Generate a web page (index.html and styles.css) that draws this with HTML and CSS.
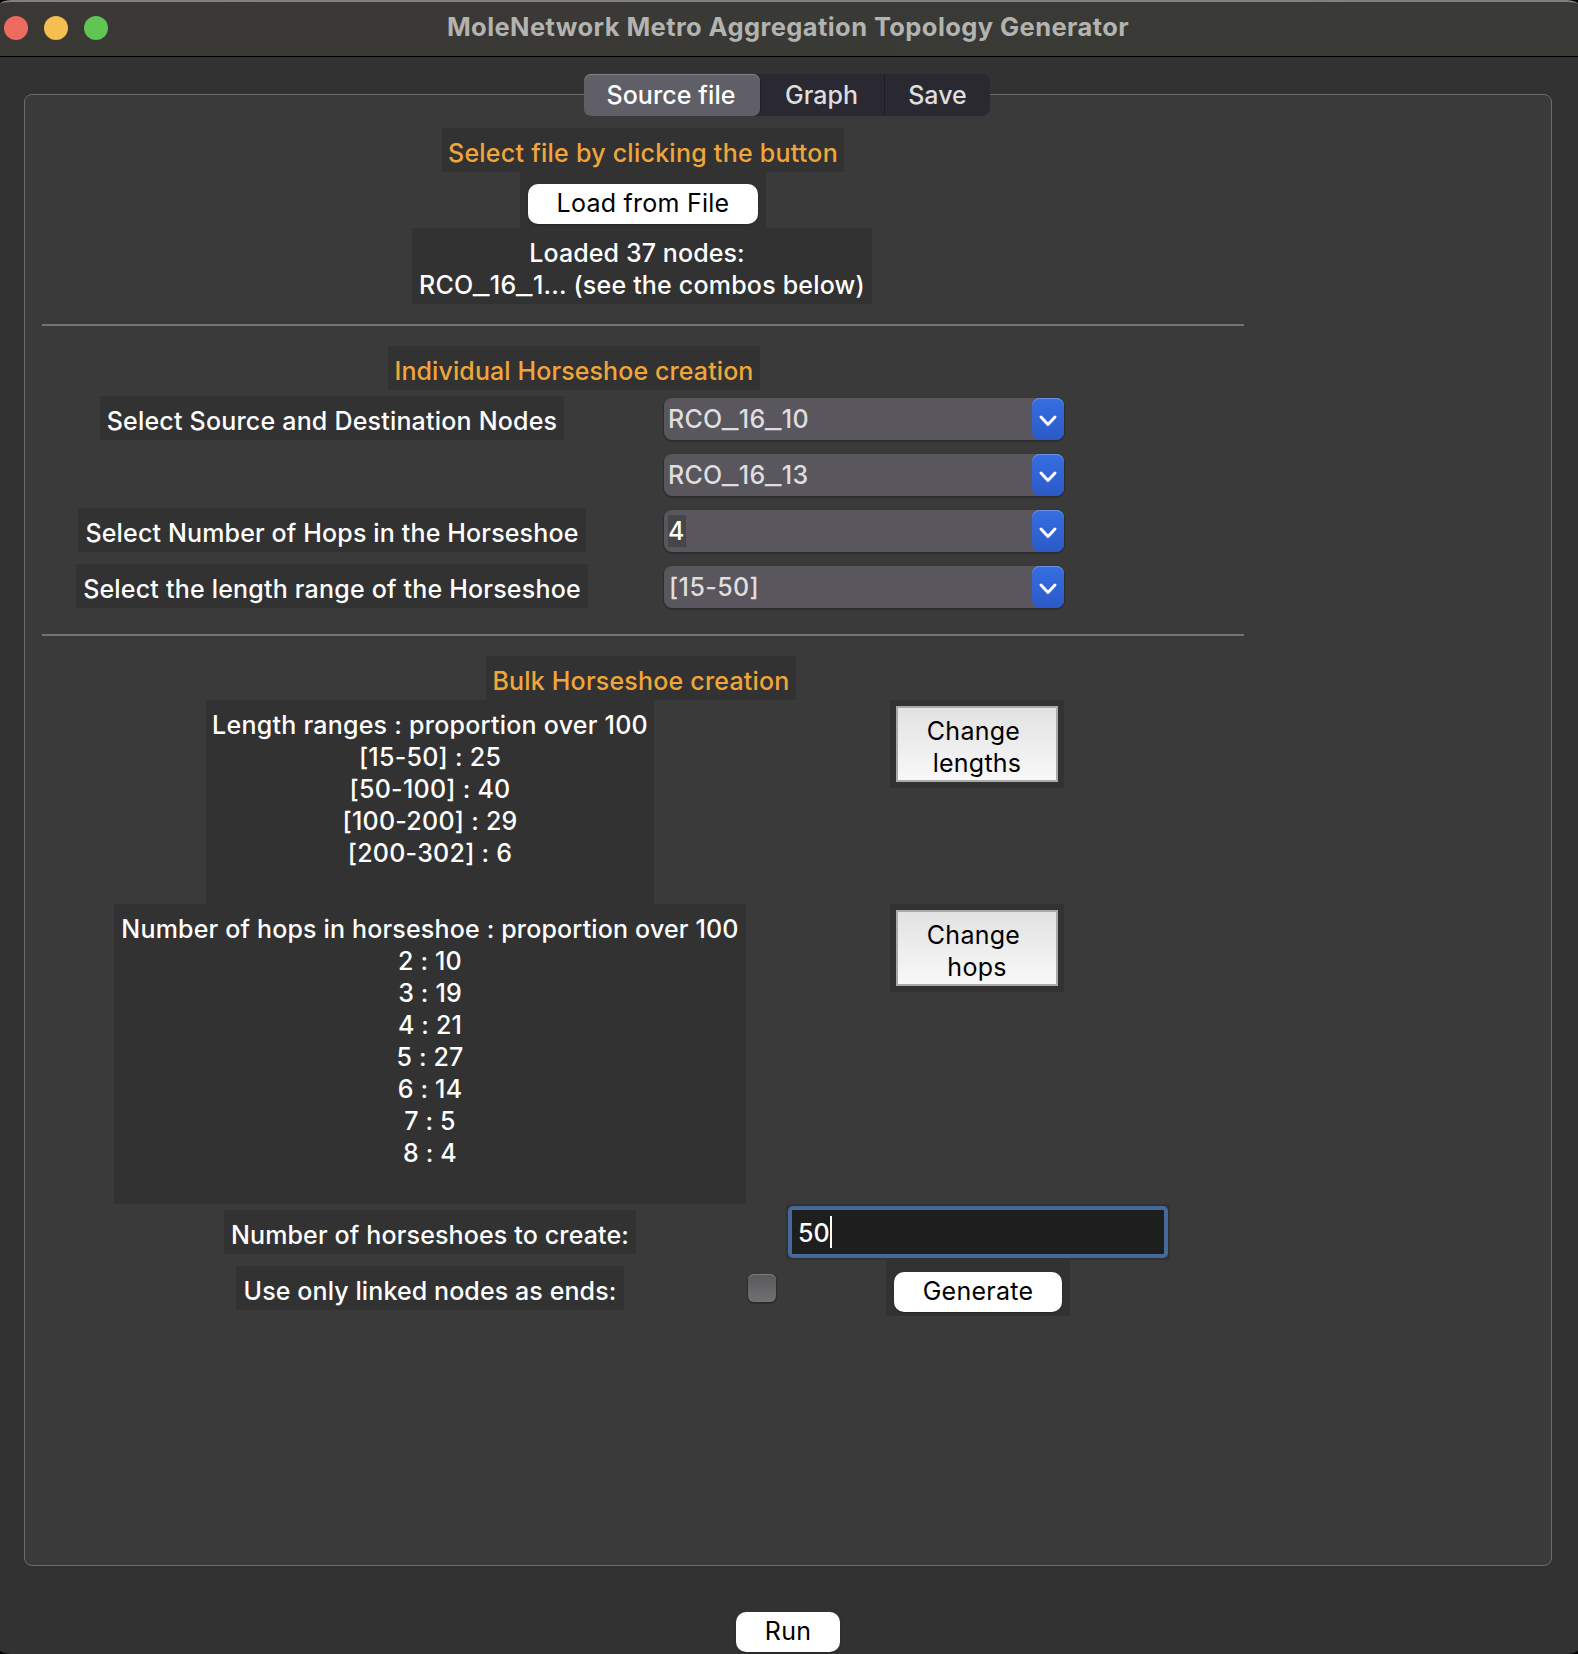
FILE: index.html
```html
<!DOCTYPE html>
<html lang="en">
<head>
<meta charset="utf-8">
<title>MoleNetwork Metro Aggregation Topology Generator</title>
<link rel="stylesheet" href="styles.css">
</head>
<body>
<div class="window">
  <header class="titlebar">
    <div class="lights">
      <span class="light light-close"></span>
      <span class="light light-min"></span>
      <span class="light light-zoom"></span>
    </div>
    <h1 class="title">MoleNetwork Metro Aggregation Topology Generator</h1>
  </header>

  <main class="content">
    <nav class="tabs">
      <div class="tab tab-source tab-active">Source file</div>
      <div class="tab tab-graph">Graph</div>
      <div class="tab tab-save">Save</div>
    </nav>

    <div class="panel">
      <section class="load">
        <div class="label heading w-select-file">Select file by clicking the button</div>
        <div class="frame frame-load"><button class="push push-load">Load from File</button></div>
        <div class="label w-loaded">
          <div class="loaded-count">Loaded 37 nodes:</div>
          <div>RCO<span class="us">_</span>16<span class="us">_</span>1... (see the combos below)</div>
        </div>
      </section>

      <hr class="rule">

      <section class="individual">
        <div class="label heading span-all w-individual">Individual Horseshoe creation</div>
        <div class="label w-nodes">Select Source and Destination Nodes</div>
        <div class="combo"><span class="combo-text">RCO<span class="us">_</span>16<span class="us">_</span>10</span><span class="combo-arrow"><svg width="20" height="14" viewBox="0 0 20 14"><path d="M3 3l7 7.5L17 3"/></svg></span></div>
        <div></div>
        <div class="combo"><span class="combo-text">RCO<span class="us">_</span>16<span class="us">_</span>13</span><span class="combo-arrow"><svg width="20" height="14" viewBox="0 0 20 14"><path d="M3 3l7 7.5L17 3"/></svg></span></div>
        <div class="label w-hops">Select Number of Hops in the Horseshoe</div>
        <div class="combo"><span class="combo-text combo-selected">4</span><span class="combo-arrow"><svg width="20" height="14" viewBox="0 0 20 14"><path d="M3 3l7 7.5L17 3"/></svg></span></div>
        <div class="label w-range">Select the length range of the Horseshoe</div>
        <div class="combo"><span class="combo-text combo-range">[15-50]</span><span class="combo-arrow"><svg width="20" height="14" viewBox="0 0 20 14"><path d="M3 3l7 7.5L17 3"/></svg></span></div>
      </section>

      <hr class="rule">

      <section class="bulk">
        <div class="label heading span-all w-bulk">Bulk Horseshoe creation</div>

        <div class="label multiline w-lengths">Length ranges : proportion over 100
[15-50] : 25
[50-100] : 40
[100-200] : 29
[200-302] : 6
</div>
        <div class="frame frame-change"><button class="bevel"><span class="bevel-first">Change</span><span>lengths</span></button></div>

        <div class="label multiline w-proportion">Number of hops in horseshoe : proportion over 100
2 : 10
3 : 19
4 : 21
5 : 27
6 : 14
7 : 5
8 : 4
</div>
        <div class="frame frame-change"><button class="bevel"><span class="bevel-first">Change</span><span>hops</span></button></div>

        <div class="label w-count">Number of horseshoes to create:</div>
        <div class="frame frame-entry"><div class="entry"><span class="entry-text">50</span><span class="caret"></span></div></div>

        <div class="label w-linked">Use only linked nodes as ends:</div>
        <div class="checkbox"></div>
        <div class="frame frame-generate"><button class="push push-generate">Generate</button></div>
      </section>
    </div>

    <button class="push push-run">Run</button>
  </main>
</div>
</body>
</html>
```
FILE: styles.css
```css
* {
  box-sizing: border-box;
}

body {
  margin: 0;
  background: #000;
  font: 450 25px/32px Inter, "Liberation Sans", sans-serif;
  letter-spacing: 0.2px;
  color: #fff;
  white-space: nowrap;
}

.window {
  display: flex;
  flex-direction: column;
  height: 1654px;
  background: #323232;
  border-radius: 12px / 4px;
  overflow: hidden;
}

/* Title bar */
.titlebar {
  display: grid;
  grid-template-columns: 446px 1fr 448px;
  align-items: center;
  height: 57px;
  padding-bottom: 2px;
  background: linear-gradient(90deg, #393835, #3a3a36);
  border-top: 2px solid #80807e;
  border-bottom: 1px solid #000;
  border-radius: 12px 12px 0 0 / 4px 4px 0 0;
}

.lights {
  display: flex;
  gap: 16px;
  padding-left: 4px;
}

.light {
  width: 24px;
  height: 24px;
  border-radius: 50%;
}

.light-close { background: #ed6a5e; }
.light-min { background: #f5bf4f; }
.light-zoom { background: #61c554; }

.title {
  margin: 0;
  padding-bottom: 3px;
  font-size: 25.5px;
  font-weight: 700;
  line-height: 32px;
  letter-spacing: 0.41px;
  text-align: center;
  color: #b3b3b0;
}

/* Tabs */
.content {
  flex: 1;
  display: flex;
  flex-direction: column;
  align-items: center;
  padding: 17px 26px 0 24px;
}

.tabs {
  display: flex;
  position: relative;
  z-index: 1;
  height: 42px;
  margin-right: 2px;
  border-radius: 8px;
  background: #2a2830;
  color: #dededf;
  letter-spacing: 0;
}

.tab {
  display: flex;
  align-items: center;
  justify-content: center;
}

.tab-source { width: 176px; padding-right: 2px; letter-spacing: 0.1px; }
.tab-graph { width: 125px; padding-right: 1px; border-right: 1px solid #1e1d22; }
.tab-save { width: 105px; }

.tab-active {
  background: #605e66;
  border-radius: 7px;
  box-shadow: inset 0 1px 0 #85838a, 1px 0 0 #1e1d22;
  color: #fff;
}

/* Notebook panel */
.panel {
  width: 1528px;
  height: 1472px;
  margin-top: -22px;
  padding: 33px 307px 0 17px;
  background: #3a3a3a;
  border: 1px solid #6c6c6c;
  border-radius: 8px;
}

.rule {
  height: 2px;
  margin: 20px 0;
  border: 0;
  background: #747474;
}

.label {
  padding: 9px 0 3px;
  background: #323232;
  text-align: center;
}

.multiline {
  white-space: pre;
}

.heading { color: #f0a63a; }

.us {
  display: inline-block;
  width: 16.5px;
  letter-spacing: 0;
  text-align: center;
  transform: scaleX(1.45);
}

.frame {
  background: #323232;
}

.push {
  display: block;
  height: 40px;
  padding: 0 0 2px;
  border: 0;
  border-radius: 10px;
  background: #fff;
  box-shadow: 0 1px 2px rgba(0, 0, 0, 0.3);
  font: inherit;
  font-weight: 400;
  letter-spacing: 0.25px;
  color: #000;
}

/* File loading */
.load {
  display: flex;
  flex-direction: column;
  align-items: center;
}

.w-select-file { width: 402px; letter-spacing: 0.25px; }
.w-loaded { width: 460px; margin-right: 2px; }
.loaded-count { padding-right: 10px; letter-spacing: 0.1px; }
.frame-load { padding: 12px 8px 4px; }
.push-load { width: 230px; }

/* Individual horseshoe */
.individual {
  display: grid;
  grid-template-columns: 512px 400px;
  grid-template-rows: 44px repeat(4, 56px);
  column-gap: 76px;
  width: 996px;
  margin-left: 34px;
  align-items: center;
  justify-items: center;
}

.span-all { grid-column: 1 / -1; }
.w-individual { width: 372px; margin-left: 8px; letter-spacing: 0.1px; }
.w-nodes { width: 464px; }
.w-hops { width: 508px; letter-spacing: 0.15px; }
.w-range { width: 512px; }

.combo {
  display: flex;
  align-items: center;
  justify-content: space-between;
  width: 400px;
  height: 42px;
  margin-top: 2px;
  padding-left: 4px;
  border-radius: 8px;
  background: #59565d;
  box-shadow: 0 1px 1px 1px #2d2d2d;
  color: #dedddf;
}

.combo-range {
  padding-left: 1px;
  letter-spacing: 0.4px;
}

.combo-selected {
  width: 18px;
  background: #464646;
  color: #fff;
}

.combo-arrow {
  display: flex;
  align-items: center;
  justify-content: center;
  width: 32px;
  height: 42px;
  padding-top: 3px;
  border-radius: 8px;
  background: linear-gradient(#366ee2, #2b5ac6);
  box-shadow: inset 0 1px 0 #6a92e8;
}

.combo-arrow path {
  fill: none;
  stroke: #fff;
  stroke-width: 3;
  stroke-linecap: round;
  stroke-linejoin: round;
}

/* Bulk horseshoe */
.bulk {
  display: grid;
  grid-template-columns: 636px 28px 384px;
  grid-template-rows: 44px 204px 300px 56px 56px;
  column-gap: 0;
  width: 1058px;
  margin-left: 70px;
  align-items: center;
  justify-items: center;
}

.w-bulk { width: 310px; margin-left: 10px; }
.w-lengths { width: 448px; height: 204px; letter-spacing: 0.25px; }
.w-proportion { width: 632px; height: 300px; letter-spacing: 0.17px; }
.w-count { width: 412px; letter-spacing: 0.15px; }
.w-linked { width: 388px; letter-spacing: 0.1px; }

.frame-change,
.frame-entry,
.frame-generate {
  grid-column: 3;
  margin-left: 20px;
}

.frame-change {
  align-self: start;
  width: 174px;
  height: 88px;
  padding: 6px;
  margin-left: 18px;
}

.bevel {
  display: flex;
  flex-direction: column;
  align-items: center;
  width: 162px;
  height: 76px;
  padding: 7px 0 0;
  border: 2px solid #a9a9a9;
  background: linear-gradient(#e2e2e2, #f8f8f8);
  font: inherit;
  font-weight: 400;
  letter-spacing: 0.25px;
  color: #000;
}

.bevel-first { padding-right: 7px; }

.frame-entry {
  width: 384px;
  height: 56px;
  padding: 2px;
}

.entry {
  display: flex;
  align-items: center;
  height: 52px;
  padding-left: 6px;
  border: 4px solid #46689a;
  border-radius: 5px;
  background: #1e1e1e;
  letter-spacing: 0;
}

.entry-text {
  width: 32px;
  padding-top: 2px;
}

.caret {
  width: 2px;
  height: 32px;
  background: #fff;
}

.checkbox {
  width: 28px;
  height: 28px;
  border-radius: 6px;
  background: linear-gradient(#59595b, #717173);
  box-shadow: inset 0 1px 0 #7e7e80, 0 1px 1px 1px #2d2d2d;
}

.frame-generate {
  height: 56px;
  padding: 12px 8px 4px;
}

.push-generate { width: 168px; }

.push-run {
  width: 104px;
  margin-top: 46px;
  margin-right: 0;
}
```
